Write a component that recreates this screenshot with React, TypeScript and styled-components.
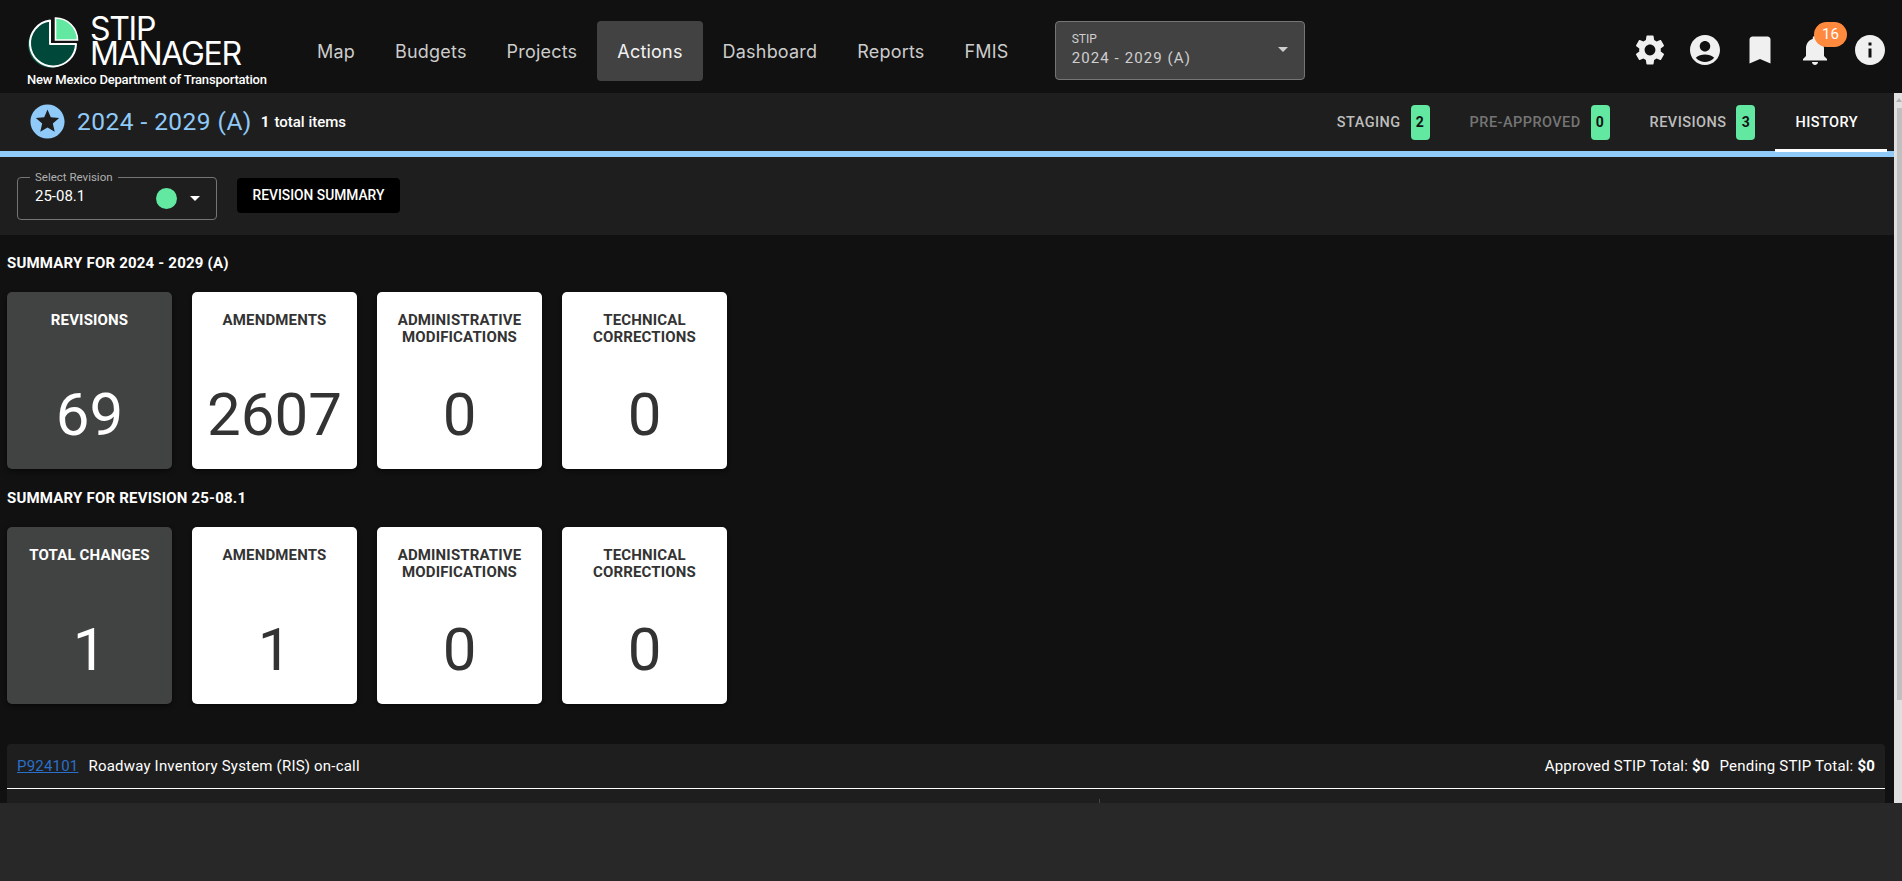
import React from 'react';
import styled, { createGlobalStyle } from 'styled-components';

const GlobalStyle = createGlobalStyle`
  * {
    box-sizing: border-box;
  }

  html,
  body {
    margin: 0;
    height: 100%;
    overflow: hidden;
    background: #111111;
    font-family: Roboto, "Liberation Sans", sans-serif;
  }
`;

const Page = styled.div`
  height: 100vh;
  display: flex;
  flex-direction: column;
  overflow: hidden;
`;

const Header = styled.header`
  flex: 0 0 93px;
  display: flex;
  align-items: center;
  background: #111111;
`;

const Brand = styled.div`
  flex: 0 0 297px;
  height: 93px;
  padding: 14px 0 0 27px;
`;

const BrandRow = styled.div`
  display: flex;
  height: 60px;
`;

const LogoMark = styled.svg`
  flex: 0 0 60px;
  width: 60px;
  height: 60px;
  margin-left: -3px;
`;

const BrandName = styled.div`
  margin: 0 0 0 6px;
  padding-top: 2px;
  font-family: Inter, sans-serif;
  font-size: 32px;
  line-height: 25px;
  letter-spacing: -1.3px;
  color: #ffffff;
`;

const Tagline = styled.div`
  margin-top: -1px;
  font-size: 13px;
  line-height: 14px;
  font-weight: 500;
  letter-spacing: -0.2px;
  color: #ffffff;
  white-space: nowrap;
`;

const Nav = styled.nav`
  display: flex;
  align-items: center;
  margin-top: 9px;
`;

const NavItem = styled.a<{ $active?: boolean }>`
  height: 60px;
  padding: 0 20px;
  display: flex;
  align-items: center;
  border-radius: 4px;
  font-family: Inter, sans-serif;
  font-size: 18px;
  letter-spacing: 0.2px;
  color: ${(p) => (p.$active ? '#f2f2f2' : '#cccccc')};
  background: ${(p) => (p.$active ? '#424242' : 'transparent')};
`;

const StipSelect = styled.div`
  position: relative;
  width: 250px;
  height: 59px;
  margin: 8px 0 0 26px;
  padding: 9px 16px;
  background: #424242;
  border: 1px solid #757575;
  border-radius: 4px;
  color: #cfcfcf;
`;

const StipLabel = styled.div`
  font-size: 12px;
  line-height: 16px;
`;

const StipValue = styled.div`
  font-size: 15px;
  line-height: 22px;
  letter-spacing: 1.1px;
`;

const Caret = styled.span<{ $color: string }>`
  width: 0;
  height: 0;
  border-left: 5px solid transparent;
  border-right: 5px solid transparent;
  border-top: 5px solid ${(p) => p.$color};
`;

const StipCaret = styled(Caret)`
  position: absolute;
  right: 16px;
  top: 25px;
`;

const HeaderIcons = styled.div`
  margin: 7px 0 0 auto;
  padding-right: 14px;
  display: flex;
  gap: 19px;
`;

const IconSlot = styled.div`
  position: relative;
  width: 36px;
  height: 36px;
`;

const IconGlyph = styled.svg`
  display: block;
  width: 36px;
  height: 36px;
  fill: #f0f0f0;
`;

const CountBadge = styled.span`
  position: absolute;
  left: 17px;
  top: -10px;
  width: 33px;
  height: 25px;
  border-radius: 13px;
  background: #ff8a3d;
  color: #ffffff;
  font-size: 15px;
  line-height: 25px;
  text-align: center;
`;

const Main = styled.main`
  flex: 1;
  min-height: 0;
  display: flex;
  background: #111111;
`;

const ScrollArea = styled.div`
  flex: 1;
  min-width: 0;
  overflow: hidden;
`;

const ScrollRail = styled.div`
  flex: 0 0 8px;
  display: flex;
  flex-direction: column;
  align-items: flex-end;
  background: #e0e0e0;
`;

const RailArrow = styled.span`
  width: 0;
  height: 0;
  margin: 5px 0 5px;
  align-self: flex-end;
  border-left: 3px solid transparent;
  border-right: 3px solid transparent;
  border-bottom: 4px solid #b0b0b0;
`;

const RailThumb = styled.div`
  width: 5px;
  height: 592px;
  margin-top: 1px;
  background: #c0c0c0;
`;

const SubBar = styled.section`
  height: 64px;
  display: flex;
  align-items: flex-start;
  background: #1e1e1e;
  border-bottom: 6px solid #90caf9;
`;

const StarBadge = styled.svg`
  width: 41px;
  height: 41px;
  margin: 8px 0 0 27px;
  fill: #90caf9;
`;

const SubTitle = styled.h1`
  margin: 13px 0 0 9px;
  font-size: 24.5px;
  line-height: 32px;
  font-weight: 400;
  letter-spacing: 0.45px;
  color: #90caf9;
`;

const ItemCount = styled.div`
  margin: 19px 0 0 9px;
  font-size: 15px;
  line-height: 20px;
  font-weight: 500;
  color: #ffffff;

  b {
    font-weight: 700;
    margin-right: 5px;
  }
`;

const Tabs = styled.div`
  margin-left: auto;
  padding-right: 7px;
  display: flex;
`;

const Tab = styled.div<{ $tone: string; $selected?: boolean; $bare?: boolean }>`
  position: relative;
  height: 58px;
  padding: 0 ${(p) => (p.$bare ? '29px' : '20px')} 0 20px;
  display: flex;
  align-items: center;
  gap: 10px;
  font-size: 14.5px;
  font-weight: 500;
  letter-spacing: 0.45px;
  color: ${(p) => p.$tone};

  ${(p) =>
    p.$selected &&
    `&::after {
      content: '';
      position: absolute;
      left: 0;
      right: 0;
      bottom: -1px;
      height: 3px;
      background: #ffffff;
    }`}
`;

const TabCount = styled.span`
  width: 19px;
  height: 35px;
  display: flex;
  align-items: center;
  justify-content: center;
  border-radius: 4px;
  background: #62e8a0;
  color: #111111;
  font-size: 14px;
  font-weight: 700;
`;

const Toolbar = styled.section`
  height: 78px;
  padding: 20px 0 0 17px;
  display: flex;
  align-items: flex-start;
  gap: 20px;
  background: #1e1e1e;
`;

const RevisionSelect = styled.div`
  position: relative;
  width: 200px;
  height: 43px;
  display: flex;
  align-items: center;
  padding: 0 16px 0 17px;
  border: 1px solid #757575;
  border-radius: 4px;
  font-size: 15px;
  color: #ffffff;
`;

const RevisionLegend = styled.span`
  position: absolute;
  left: 12px;
  top: -6px;
  padding: 0 5px;
  background: #1e1e1e;
  font-size: 11.5px;
  line-height: 11px;
  color: #b0b0b0;
`;

const RevisionValue = styled.span`
  flex: 1;
  margin-bottom: 6px;
`;

const StatusDot = styled.span`
  width: 21px;
  height: 21px;
  margin: 0 13px 0 1px;
  border-radius: 50%;
  background: #62e8a0;
`;

const SummaryButton = styled.button`
  width: 163px;
  height: 35px;
  margin-top: 1px;
  padding: 0 0 2px;
  border: 0;
  border-radius: 4px;
  background: #000000;
  color: #ffffff;
  font-family: inherit;
  font-size: 13.8px;
  font-weight: 500;
`;

const Content = styled.div`
  padding: 20px 9px 0 7px;
`;

const SectionTitle = styled.h2`
  margin: 0 0 21px;
  font-size: 15px;
  line-height: 16px;
  font-weight: 700;
  letter-spacing: 0.2px;
  color: #ffffff;
`;

const CardRow = styled.div`
  display: flex;
  gap: 20px;
  margin-bottom: 21px;
`;

const StatCard = styled.div<{ $dark?: boolean }>`
  width: 165px;
  height: 177px;
  padding: 20px 8px 19px;
  display: flex;
  flex-direction: column;
  justify-content: space-between;
  border-radius: 5px;
  text-align: center;
  background: ${(p) => (p.$dark ? '#414342' : '#ffffff')};
  color: ${(p) => (p.$dark ? '#ffffff' : '#333333')};
  box-shadow: 0 2px 4px rgba(0, 0, 0, 0.5);
`;

const StatLabel = styled.div`
  font-size: 15px;
  line-height: 17px;
  font-weight: 700;
  letter-spacing: 0.15px;
`;

const StatValue = styled.div`
  font-size: 60px;
  line-height: 70px;
  font-weight: 400;
`;

const ProjectPanel = styled.section`
  margin-top: 40px;
  height: 200px;
  background: #1e1e1e;
  border-radius: 4px;
`;

const ProjectRow = styled.div`
  height: 45px;
  padding: 0 10px;
  display: flex;
  align-items: center;
  border-bottom: 1.5px solid #ffffff;
  font-size: 15px;
  letter-spacing: 0.2px;
  color: #ffffff;
`;

const ProjectLink = styled.a`
  margin-right: 10px;
  color: #2a6fc9;
  text-decoration: underline;
`;

const Totals = styled.div`
  margin-left: auto;
  display: flex;
  gap: 10px;

  b {
    font-weight: 700;
  }
`;

const ProjectBody = styled.div`
  height: 150px;
  margin-top: 10px;
  display: grid;
  grid-template-columns: 1093px 1fr;
`;

const ProjectColumn = styled.div`
  border-right: 1px solid #444444;
`;

const BottomBar = styled.footer`
  flex: 0 0 78px;
  background: #282828;
`;

const navLinks = ['Map', 'Budgets', 'Projects', 'Actions', 'Dashboard', 'Reports', 'FMIS'];

const headerIcons = [
  'M19.14 12.94c.04-.3.06-.61.06-.94 0-.32-.02-.64-.07-.94l2.03-1.58c.18-.14.23-.41.12-.61l-1.92-3.32c-.12-.22-.37-.29-.59-.22l-2.39.96c-.5-.38-1.03-.7-1.62-.94l-.36-2.54c-.04-.24-.24-.41-.48-.41h-3.84c-.24 0-.43.17-.47.41l-.36 2.54c-.59.24-1.13.57-1.62.94l-2.39-.96c-.22-.08-.47 0-.59.22L2.74 8.87c-.12.21-.08.47.12.61l2.03 1.58c-.05.3-.09.63-.09.94s.02.64.07.94l-2.03 1.58c-.18.14-.23.41-.12.61l1.92 3.32c.12.22.37.29.59.22l2.39-.96c.5.38 1.03.7 1.62.94l.36 2.54c.05.24.24.41.48.41h3.84c.24 0 .44-.17.47-.41l.36-2.54c.59-.24 1.13-.56 1.62-.94l2.39.96c.22.08.47 0 .59-.22l1.92-3.32c.12-.22.07-.47-.12-.61l-2.01-1.58zM12 15.6c-1.98 0-3.6-1.62-3.6-3.6s1.62-3.6 3.6-3.6 3.6 1.62 3.6 3.6-1.62 3.6-3.6 3.6z',
  'M12 2C6.48 2 2 6.48 2 12s4.48 10 10 10 10-4.48 10-10S17.52 2 12 2zm0 4c1.93 0 3.5 1.57 3.5 3.5S13.93 13 12 13s-3.5-1.57-3.5-3.5S10.07 6 12 6zm0 14c-2.03 0-4.43-.82-6.14-2.88C7.55 15.8 9.68 15 12 15s4.45.8 6.14 2.12C16.43 19.18 14.03 20 12 20z',
  'M17 3H7c-1.1 0-1.99.9-1.99 2L5 21l7-3 7 3V5c0-1.1-.9-2-2-2z',
  'M12 22c1.1 0 2-.9 2-2h-4c0 1.1.89 2 2 2zm6-6v-5c0-3.07-1.64-5.64-4.5-6.32V4c0-.83-.67-1.5-1.5-1.5s-1.5.67-1.5 1.5v.68C7.63 5.36 6 7.92 6 11v5l-2 2v1h16v-1l-2-2z',
  'M12 2C6.48 2 2 6.48 2 12s4.48 10 10 10 10-4.48 10-10S17.52 2 12 2zm1 15h-2v-6h2v6zm0-8h-2V7h2v2z',
];

const tabs = [
  { label: 'STAGING', count: 2, tone: '#bdbdbd' },
  { label: 'PRE-APPROVED', count: 0, tone: '#757575' },
  { label: 'REVISIONS', count: 3, tone: '#bdbdbd' },
];

const stipStats = [
  { label: 'REVISIONS', value: 69, dark: true },
  { label: 'AMENDMENTS', value: 2607 },
  { label: 'ADMINISTRATIVE MODIFICATIONS', value: 0 },
  { label: 'TECHNICAL CORRECTIONS', value: 0 },
];

const revisionStats = [
  { label: 'TOTAL CHANGES', value: 1, dark: true },
  { label: 'AMENDMENTS', value: 1 },
  { label: 'ADMINISTRATIVE MODIFICATIONS', value: 0 },
  { label: 'TECHNICAL CORRECTIONS', value: 0 },
];

const Logo = () => (
  <LogoMark viewBox="24 14 60 60">
    <path d="M50 21 A23 23 0 1 0 76 46 L50 46 Z" fill="#0a5a45" transform="translate(-2 1)" />
    <path
      d="M50 20.6 A23 23 0 1 0 76 44 L50 44 Z"
      fill="#00483a"
      stroke="#ffffff"
      strokeWidth="2"
      strokeLinejoin="round"
    />
    <path d="M55.5 18 A22 22 0 0 1 77.5 40 L55.5 40 Z" fill="#62e8a0" stroke="#ffffff" strokeWidth="1.6" />
  </LogoMark>
);

const StatGrid = ({ stats }: { stats: { label: string; value: number; dark?: boolean }[] }) => (
  <CardRow>
    {stats.map((stat) => (
      <StatCard key={stat.label} $dark={stat.dark}>
        <StatLabel>{stat.label}</StatLabel>
        <StatValue>{stat.value}</StatValue>
      </StatCard>
    ))}
  </CardRow>
);

export default function App() {
  return (
    <Page>
      <GlobalStyle />
      <Header>
        <Brand>
          <BrandRow>
            <Logo />
            <BrandName>
              STIP
              <br />
              MANAGER
            </BrandName>
          </BrandRow>
          <Tagline>New Mexico Department of Transportation</Tagline>
        </Brand>
        <Nav>
          {navLinks.map((link) => (
            <NavItem key={link} $active={link === 'Actions'}>
              {link}
            </NavItem>
          ))}
        </Nav>
        <StipSelect>
          <StipLabel>STIP</StipLabel>
          <StipValue>2024 - 2029 (A)</StipValue>
          <StipCaret $color="#cfcfcf" />
        </StipSelect>
        <HeaderIcons>
          {headerIcons.map((d, i) => (
            <IconSlot key={d}>
              <IconGlyph viewBox="0 0 24 24">
                <path d={d} />
              </IconGlyph>
              {i === 3 && <CountBadge>16</CountBadge>}
            </IconSlot>
          ))}
        </HeaderIcons>
      </Header>
      <Main>
        <ScrollArea>
          <SubBar>
            <StarBadge viewBox="0 0 24 24">
              <path d="M11.99 2C6.47 2 2 6.48 2 12s4.47 10 9.99 10C17.52 22 22 17.52 22 12S17.52 2 11.99 2zm4.24 16L12 15.45 7.77 18l1.12-4.81-3.73-3.23 4.92-.42L12 5l1.92 4.53 4.92.42-3.73 3.23L16.23 18z" />
            </StarBadge>
            <SubTitle>2024 - 2029 (A)</SubTitle>
            <ItemCount>
              <b>1</b>total items
            </ItemCount>
            <Tabs>
              {tabs.map((tab) => (
                <Tab key={tab.label} $tone={tab.tone}>
                  {tab.label}
                  <TabCount>{tab.count}</TabCount>
                </Tab>
              ))}
              <Tab $tone="#ffffff" $selected $bare>
                HISTORY
              </Tab>
            </Tabs>
          </SubBar>
          <Toolbar>
            <RevisionSelect>
              <RevisionLegend>Select Revision</RevisionLegend>
              <RevisionValue>25-08.1</RevisionValue>
              <StatusDot />
              <Caret $color="#ffffff" />
            </RevisionSelect>
            <SummaryButton>REVISION SUMMARY</SummaryButton>
          </Toolbar>
          <Content>
            <SectionTitle>SUMMARY FOR 2024 - 2029 (A)</SectionTitle>
            <StatGrid stats={stipStats} />
            <SectionTitle>SUMMARY FOR REVISION 25-08.1</SectionTitle>
            <StatGrid stats={revisionStats} />
            <ProjectPanel>
              <ProjectRow>
                <ProjectLink>P924101</ProjectLink>
                Roadway Inventory System (RIS) on-call
                <Totals>
                  <span>
                    Approved STIP Total: <b>$0</b>
                  </span>
                  <span>
                    Pending STIP Total: <b>$0</b>
                  </span>
                </Totals>
              </ProjectRow>
              <ProjectBody>
                <ProjectColumn />
                <div />
              </ProjectBody>
            </ProjectPanel>
          </Content>
        </ScrollArea>
        <ScrollRail>
          <RailArrow />
          <RailThumb />
        </ScrollRail>
      </Main>
      <BottomBar />
    </Page>
  );
}
